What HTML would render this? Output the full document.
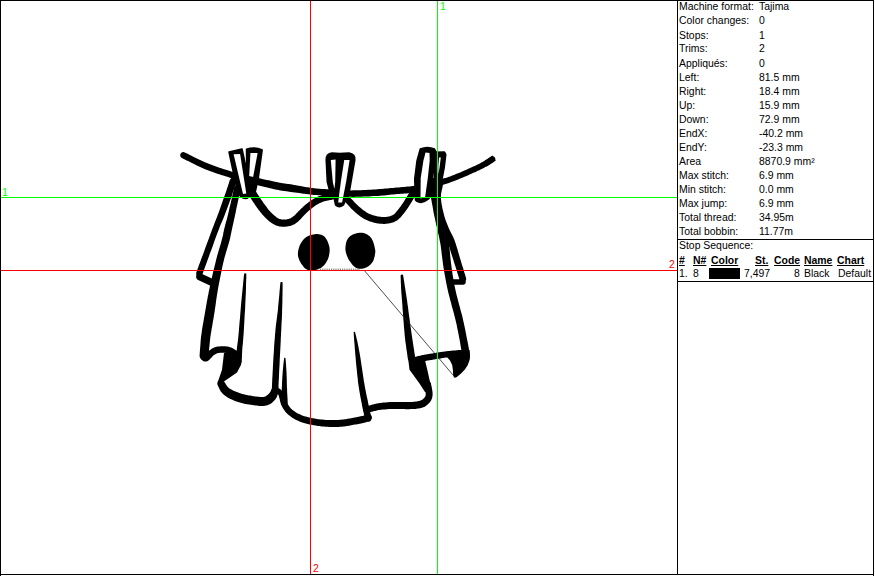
<!DOCTYPE html>
<html><head><meta charset="utf-8">
<style>
html,body{margin:0;padding:0;background:#fff;}
body{width:875px;height:576px;position:relative;overflow:hidden;font-family:"Liberation Sans",Arial,sans-serif;font-size:10px;color:#000;}
.l{position:absolute;background:#000;}
.g{position:absolute;background:#0f0;}
.r{position:absolute;background:#f00;}
.t{position:absolute;white-space:nowrap;line-height:12px;height:12px;transform:scaleX(1.043);transform-origin:0 0;}
.k{left:679px;}
.v{left:759px;}
.h{font-weight:bold;text-decoration:underline;}
svg{position:absolute;left:0;top:0;}
</style></head><body>
<div class="l" style="left:0;top:0;width:874px;height:1px"></div>
<div class="l" style="left:0;top:574px;width:874px;height:1px"></div>
<div class="l" style="left:0;top:0;width:1px;height:576px"></div>
<div class="l" style="left:873px;top:0;width:1px;height:576px"></div>
<div class="l" style="left:677px;top:0;width:1px;height:575px"></div>
<div class="l" style="left:677px;top:239px;width:197px;height:1px"></div>
<div class="l" style="left:677px;top:281px;width:197px;height:1px"></div>
<svg width="875" height="576" viewBox="0 0 875 576">
<path d="M246.5,149.3 Q254.5,146.3 262.2,150 L258.3,178 L255,193 L247,193 Z" fill="#000" stroke="#000" stroke-width="1.5" stroke-linejoin="round"/>
<path d="M250.4,152.9 L257.6,152.9 L252.6,180 L249,180 Z" fill="#fff"/>
<path d="M435,152.2 L444.5,152 L445.8,154.5 L444.3,167 L442.2,178 L440,187 L434,187 Z" fill="#000" stroke="#000" stroke-width="1.5" stroke-linejoin="round"/>
<path d="M439,157.6 L440.8,157.6 L439.6,167 L438.5,174.5 L438.3,167 Z" fill="#fff"/>
<path d="M181.9,158.0 L181.9,158.0 L181.9,158.0 L181.9,158.0 L182.1,158.1 L182.3,158.2 L182.6,158.4 L183.0,158.6 L183.5,158.9 L184.3,159.2 L185.3,159.7 L186.6,160.4 L188.2,161.1 L190.0,162.1 L191.9,163.0 L194.1,164.1 L196.3,165.2 L198.5,166.3 L200.7,167.3 L202.9,168.3 L205.0,169.2 L207.1,170.0 L209.1,170.8 L211.2,171.6 L213.3,172.3 L215.3,173.0 L217.4,173.7 L219.3,174.3 L221.3,174.9 L223.1,175.5 L224.8,176.1 L226.4,176.6 L227.9,177.1 L229.3,177.6 L230.7,178.0 L232.0,178.4 L233.3,178.8 L234.6,179.2 L236.1,179.6 L237.6,180.0 L239.2,180.4 L240.9,180.9 L242.8,181.4 L244.7,181.9 L246.7,182.4 L248.7,183.0 L250.7,183.5 L252.7,184.0 L254.8,184.5 L256.8,185.0 L258.8,185.5 L260.8,186.0 L262.9,186.5 L265.0,187.0 L267.1,187.5 L269.2,188.0 L271.3,188.5 L273.3,188.9 L275.2,189.4 L276.9,189.7 L278.6,190.1 L280.0,190.4 L281.2,190.6 L282.2,190.7 L283.1,190.9 L284.0,191.0 L284.8,191.1 L285.7,191.2 L286.7,191.3 L287.8,191.5 L289.2,191.7 L290.9,191.9 L292.8,192.2 L294.9,192.5 L297.1,192.8 L299.4,193.1 L301.8,193.4 L304.1,193.7 L306.3,194.0 L308.4,194.3 L310.4,194.5 L312.2,194.7 L313.8,194.9 L315.3,195.0 L316.7,195.1 L318.1,195.2 L319.5,195.2 L321.0,195.3 L322.5,195.4 L324.2,195.5 L326.1,195.6 L328.2,195.7 L330.4,195.9 L332.8,196.0 L335.2,196.2 L337.8,196.3 L340.4,196.5 L343.0,196.6 L345.6,196.7 L348.2,196.8 L350.8,196.8 L353.3,196.9 L355.9,196.8 L358.5,196.8 L361.1,196.7 L363.7,196.6 L366.2,196.5 L368.7,196.4 L371.2,196.3 L373.5,196.1 L375.8,196.0 L378.0,195.9 L380.1,195.7 L382.1,195.5 L384.1,195.4 L386.0,195.2 L387.9,195.0 L389.8,194.8 L391.6,194.6 L393.4,194.5 L395.3,194.3 L397.2,194.1 L399.0,194.0 L400.9,193.8 L402.7,193.7 L404.6,193.5 L406.4,193.4 L408.3,193.2 L410.1,193.0 L411.9,192.8 L413.8,192.6 L415.6,192.3 L417.4,192.0 L419.2,191.7 L420.9,191.3 L422.7,191.0 L424.4,190.6 L426.1,190.3 L427.7,189.9 L429.3,189.5 L430.8,189.1 L432.3,188.7 L433.7,188.3 L435.0,187.8 L436.3,187.4 L437.5,186.9 L438.6,186.5 L439.8,186.0 L440.8,185.6 L441.9,185.2 L442.9,184.9 L443.9,184.5 L444.8,184.3 L445.6,184.0 L446.4,183.8 L447.2,183.5 L448.1,183.3 L449.0,183.0 L450.1,182.6 L451.3,182.1 L452.7,181.6 L454.3,181.0 L456.2,180.2 L458.1,179.4 L460.2,178.6 L462.3,177.7 L464.5,176.8 L466.6,175.9 L468.7,175.0 L470.7,174.1 L472.4,173.3 L474.1,172.6 L475.7,171.9 L477.2,171.1 L478.7,170.4 L480.2,169.7 L481.5,169.1 L482.8,168.4 L484.1,167.8 L485.3,167.1 L486.4,166.5 L487.5,165.9 L488.5,165.3 L489.5,164.7 L490.4,164.1 L491.2,163.6 L492.0,163.1 L492.7,162.6 L493.2,162.2 L493.7,161.9 L494.1,161.6 L494.9,160.8 L495.3,159.8 L495.3,158.6 L494.9,157.6 L494.1,156.8 L493.1,156.4 L491.9,156.4 L490.9,156.8 L490.5,157.1 L489.9,157.4 L489.3,157.8 L488.7,158.3 L488.0,158.8 L487.2,159.3 L486.4,159.8 L485.5,160.4 L484.6,160.9 L483.6,161.5 L482.5,162.0 L481.4,162.6 L480.2,163.2 L478.9,163.9 L477.6,164.5 L476.2,165.2 L474.8,165.9 L473.3,166.6 L471.7,167.3 L470.1,168.1 L468.3,168.8 L466.4,169.7 L464.4,170.5 L462.2,171.5 L460.1,172.4 L458.0,173.2 L455.9,174.1 L454.0,174.9 L452.2,175.6 L450.7,176.2 L449.3,176.7 L448.2,177.1 L447.2,177.4 L446.4,177.7 L445.6,177.9 L444.8,178.1 L444.0,178.3 L443.1,178.6 L442.1,178.8 L441.1,179.1 L439.9,179.5 L438.8,179.9 L437.7,180.3 L436.5,180.7 L435.4,181.1 L434.2,181.5 L433.0,181.8 L431.8,182.2 L430.5,182.6 L429.2,182.9 L427.8,183.2 L426.3,183.6 L424.7,183.9 L423.1,184.3 L421.4,184.6 L419.7,184.9 L418.0,185.2 L416.3,185.5 L414.6,185.8 L412.8,186.0 L411.1,186.3 L409.4,186.5 L407.6,186.6 L405.9,186.8 L404.0,187.0 L402.2,187.1 L400.4,187.2 L398.5,187.4 L396.6,187.5 L394.7,187.7 L392.8,187.9 L391.0,188.1 L389.1,188.2 L387.3,188.4 L385.4,188.6 L383.5,188.8 L381.6,189.0 L379.6,189.1 L377.5,189.3 L375.4,189.4 L373.1,189.5 L370.8,189.7 L368.4,189.8 L365.9,189.9 L363.4,190.1 L360.8,190.2 L358.3,190.2 L355.8,190.3 L353.3,190.3 L350.8,190.4 L348.4,190.3 L345.8,190.3 L343.3,190.2 L340.7,190.1 L338.2,189.9 L335.6,189.8 L333.2,189.6 L330.8,189.5 L328.6,189.3 L326.5,189.2 L324.6,189.1 L322.9,189.0 L321.4,188.9 L319.9,188.8 L318.6,188.7 L317.2,188.6 L315.9,188.4 L314.4,188.3 L312.9,188.1 L311.2,187.9 L309.3,187.6 L307.3,187.3 L305.1,186.9 L302.8,186.5 L300.5,186.1 L298.3,185.7 L296.1,185.3 L294.0,185.0 L292.1,184.6 L290.4,184.3 L288.9,184.1 L287.7,183.9 L286.6,183.8 L285.8,183.7 L285.0,183.6 L284.2,183.4 L283.4,183.3 L282.5,183.2 L281.4,183.0 L280.0,182.7 L278.5,182.4 L276.7,182.1 L274.9,181.7 L272.9,181.2 L270.8,180.8 L268.7,180.3 L266.6,179.9 L264.5,179.4 L262.4,178.9 L260.4,178.5 L258.4,178.1 L256.4,177.6 L254.3,177.2 L252.3,176.7 L250.2,176.3 L248.2,175.9 L246.3,175.4 L244.4,175.0 L242.6,174.6 L240.8,174.2 L239.2,173.8 L237.7,173.4 L236.4,173.0 L235.1,172.7 L233.8,172.3 L232.5,171.9 L231.2,171.5 L229.9,171.1 L228.4,170.6 L226.8,170.1 L225.0,169.5 L223.2,168.9 L221.3,168.3 L219.4,167.7 L217.4,167.0 L215.4,166.3 L213.4,165.6 L211.4,164.8 L209.4,164.1 L207.5,163.3 L205.5,162.5 L203.4,161.5 L201.2,160.5 L199.0,159.5 L196.9,158.4 L194.8,157.4 L192.8,156.4 L191.0,155.5 L189.4,154.7 L188.1,154.1 L187.1,153.6 L186.3,153.2 L185.8,153.0 L185.4,152.8 L185.2,152.7 L185.2,152.6 L185.2,152.6 L185.1,152.6 L184.9,152.5 L184.7,152.4 L183.6,152.1 L182.3,152.2 L181.3,152.8 L180.5,153.8 L180.2,154.9 L180.3,156.2 L180.9,157.2Z" fill="#000"/>
<path d="M486.6,166.4 L495.8,160.4 L492.6,155.6 L483.4,161.6Z" fill="#000"/>
<path d="M229,152 L242,149 L245.5,165 L250,196 Q246,200.5 241,197 L237.5,192 Z" fill="#000" stroke="#000" stroke-width="1.5" stroke-linejoin="round"/>
<path d="M233.6,154.2 L240.1,153.9 L246.3,193.4 L243,194 Z" fill="#fff"/>
<path d="M249.5,196.2 L249.9,196.8 L250.4,197.7 L251.1,198.7 L251.8,199.9 L252.7,201.2 L253.5,202.5 L254.4,203.8 L255.3,205.2 L256.2,206.5 L257.1,207.7 L257.9,208.8 L258.7,209.9 L259.6,211.0 L260.5,212.2 L261.4,213.3 L262.3,214.4 L263.3,215.5 L264.2,216.6 L265.2,217.6 L266.2,218.6 L267.2,219.5 L268.1,220.3 L269.1,221.2 L270.2,222.0 L271.2,222.7 L272.3,223.4 L273.4,224.1 L274.5,224.7 L275.6,225.3 L276.8,225.7 L278.1,226.1 L279.3,226.4 L280.6,226.6 L281.8,226.7 L283.0,226.8 L284.1,226.8 L285.3,226.7 L286.4,226.6 L287.4,226.5 L288.4,226.3 L289.4,226.1 L290.4,225.9 L291.3,225.6 L292.2,225.2 L293.1,224.8 L294.0,224.4 L294.8,223.9 L295.6,223.4 L296.5,222.8 L297.3,222.2 L298.2,221.4 L299.1,220.6 L300.0,219.8 L300.8,218.9 L301.6,218.0 L302.5,217.1 L303.2,216.2 L304.0,215.4 L304.8,214.6 L305.5,213.9 L306.3,213.1 L307.2,212.3 L308.0,211.6 L308.8,210.8 L309.7,210.1 L310.5,209.4 L311.3,208.7 L312.1,208.0 L312.9,207.4 L313.7,206.8 L314.6,206.2 L315.5,205.6 L316.3,205.1 L317.2,204.5 L318.1,204.0 L319.0,203.5 L319.9,203.1 L320.8,202.7 L321.7,202.3 L322.6,201.9 L323.5,201.6 L324.5,201.3 L325.7,201.0 L326.8,200.7 L328.0,200.5 L329.1,200.3 L330.1,200.1 L331.1,199.9 L332.0,199.8 L332.6,199.6 L333.8,199.2 L334.7,198.3 L335.1,197.1 L335.1,195.9 L334.7,194.7 L333.8,193.8 L332.6,193.4 L331.4,193.4 L330.8,193.5 L330.0,193.6 L329.1,193.8 L328.0,193.9 L326.8,194.1 L325.5,194.4 L324.2,194.6 L322.9,194.9 L321.6,195.3 L320.4,195.7 L319.2,196.1 L318.1,196.6 L317.1,197.1 L316.0,197.6 L314.9,198.1 L313.9,198.7 L312.9,199.3 L311.8,199.9 L310.9,200.5 L309.9,201.2 L308.9,201.9 L307.9,202.7 L307.0,203.4 L306.0,204.2 L305.1,205.0 L304.3,205.8 L303.4,206.6 L302.5,207.4 L301.7,208.1 L300.9,208.9 L300.0,209.8 L299.1,210.7 L298.2,211.6 L297.4,212.5 L296.6,213.3 L295.8,214.1 L295.1,214.9 L294.4,215.5 L293.7,216.1 L293.1,216.6 L292.4,217.1 L291.8,217.5 L291.2,217.8 L290.6,218.2 L290.1,218.4 L289.6,218.6 L289.0,218.8 L288.5,219.0 L287.9,219.1 L287.2,219.3 L286.4,219.4 L285.6,219.5 L284.8,219.5 L284.0,219.6 L283.2,219.6 L282.3,219.5 L281.5,219.4 L280.8,219.3 L280.0,219.1 L279.4,218.9 L278.7,218.6 L277.9,218.2 L277.2,217.7 L276.4,217.2 L275.7,216.6 L274.9,216.0 L274.1,215.3 L273.2,214.6 L272.4,213.8 L271.6,213.0 L270.8,212.2 L270.0,211.3 L269.2,210.4 L268.4,209.4 L267.6,208.4 L266.8,207.3 L266.0,206.2 L265.1,205.1 L264.3,204.0 L263.5,202.9 L262.7,201.8 L261.9,200.6 L261.1,199.4 L260.2,198.1 L259.4,196.8 L258.6,195.6 L257.8,194.4 L257.2,193.4 L256.6,192.5 L256.1,191.8 L255.1,190.7 L253.6,190.1 L252.1,190.1 L250.6,190.7 L249.5,191.7 L248.9,193.2 L248.9,194.7Z" fill="#000"/>
<path d="M345.0,202.6 L345.5,202.1 L346.0,201.6 L346.2,201.2 L346.3,201.1 L346.3,201.0 L346.1,201.2 L345.7,201.4 L345.1,201.4 L344.6,201.4 L344.6,201.3 L344.9,201.6 L345.5,202.2 L346.2,203.0 L347.1,203.9 L348.0,205.0 L349.0,206.1 L350.1,207.3 L351.1,208.5 L352.2,209.6 L353.3,210.6 L354.4,211.5 L355.4,212.4 L356.4,213.3 L357.5,214.2 L358.6,215.1 L359.7,215.9 L360.8,216.7 L362.0,217.5 L363.1,218.2 L364.2,218.9 L365.4,219.5 L366.5,220.0 L367.7,220.6 L368.8,221.0 L369.9,221.4 L371.1,221.8 L372.2,222.1 L373.3,222.5 L374.4,222.7 L375.5,223.0 L376.6,223.2 L377.8,223.4 L378.9,223.6 L380.0,223.7 L381.2,223.8 L382.3,223.8 L383.4,223.9 L384.6,223.9 L385.6,223.8 L386.7,223.7 L387.7,223.6 L388.7,223.5 L389.7,223.3 L390.7,223.1 L391.7,222.8 L392.7,222.5 L393.7,222.2 L394.6,221.8 L395.5,221.3 L396.5,220.8 L397.4,220.2 L398.2,219.5 L399.0,218.8 L399.8,218.1 L400.5,217.4 L401.1,216.7 L401.7,215.9 L402.3,215.2 L402.9,214.5 L403.4,213.9 L404.0,213.2 L404.6,212.4 L405.1,211.7 L405.7,210.9 L406.2,210.2 L406.8,209.4 L407.3,208.7 L407.8,207.9 L408.3,207.2 L408.8,206.4 L409.4,205.6 L409.9,204.7 L410.5,203.8 L411.0,202.9 L411.6,202.0 L412.1,201.2 L412.6,200.3 L413.1,199.5 L413.6,198.8 L414.0,198.1 L414.4,197.5 L414.7,196.9 L415.1,196.3 L415.4,195.7 L415.8,195.2 L416.0,194.7 L416.3,194.3 L416.6,193.9 L416.8,193.5 L416.9,193.3 L417.4,192.1 L417.4,190.8 L416.9,189.7 L416.0,188.8 L414.8,188.3 L413.5,188.3 L412.4,188.8 L411.5,189.7 L411.3,190.0 L411.1,190.3 L410.8,190.7 L410.5,191.1 L410.2,191.6 L409.8,192.1 L409.4,192.6 L409.1,193.2 L408.6,193.8 L408.2,194.5 L407.8,195.2 L407.3,196.0 L406.8,196.8 L406.3,197.6 L405.8,198.5 L405.2,199.3 L404.7,200.2 L404.2,201.0 L403.7,201.9 L403.2,202.6 L402.7,203.4 L402.2,204.1 L401.7,204.8 L401.2,205.6 L400.7,206.3 L400.2,206.9 L399.7,207.6 L399.2,208.3 L398.7,208.9 L398.2,209.5 L397.6,210.2 L397.0,210.9 L396.5,211.6 L396.0,212.2 L395.4,212.8 L394.9,213.4 L394.4,213.9 L393.9,214.3 L393.4,214.7 L392.9,215.0 L392.4,215.3 L391.8,215.6 L391.2,215.8 L390.6,216.0 L389.9,216.2 L389.2,216.4 L388.5,216.6 L387.7,216.7 L386.9,216.8 L386.1,216.9 L385.3,216.9 L384.4,217.0 L383.5,217.0 L382.6,216.9 L381.7,216.9 L380.7,216.8 L379.8,216.7 L378.8,216.6 L377.9,216.4 L376.9,216.2 L376.0,216.0 L375.0,215.8 L374.1,215.5 L373.1,215.3 L372.2,215.0 L371.2,214.6 L370.3,214.3 L369.4,213.9 L368.5,213.4 L367.6,212.9 L366.6,212.4 L365.7,211.8 L364.7,211.1 L363.8,210.4 L362.8,209.7 L361.8,208.9 L360.8,208.1 L359.8,207.2 L358.8,206.4 L357.9,205.6 L357.0,204.7 L356.0,203.8 L355.0,202.8 L354.0,201.7 L353.0,200.6 L352.0,199.5 L351.0,198.4 L350.0,197.5 L349.1,196.6 L348.0,195.9 L346.8,195.3 L345.3,195.0 L343.9,195.2 L342.6,195.7 L341.8,196.4 L341.3,197.0 L340.9,197.5 L340.7,197.7 L340.8,197.6 L341.0,197.4 L340.2,198.4 L339.8,199.6 L339.9,200.9 L340.4,202.0 L341.4,202.8 L342.6,203.2 L343.9,203.1Z" fill="#000"/>
<path d="M326.2,160 Q326,153.5 332,153 L339.6,153.6 L349,153 Q355.5,154 354.8,160 L349.5,190.8 L343.5,205 Q339,208.5 335.6,205 L333.5,195 L329.5,190 L327.3,182 Z" fill="#000" stroke="#000" stroke-width="1.5" stroke-linejoin="round"/>
<path d="M330.8,160 L335.6,159.5 L335.2,182 L334.4,189 L332.8,182 Z" fill="#fff"/>
<path d="M344.25,160 L349.6,160 L346.1,182 L342.1,202.5 L338.2,202.5 L340.8,182 Z" fill="#fff"/>
<path d="M420.3,149 Q427.4,146 434.5,149 L436.5,153 L432.1,179 L430,197.3 L428.5,199 Q422,204.5 416.5,201 L415.5,199.9 L414.7,179 L417,160.75 Z" fill="#000" stroke="#000" stroke-width="1.5" stroke-linejoin="round"/>
<path d="M425.5,152.6 L429.5,152.9 L429.7,160.75 L427.8,178 L425.1,197.3 L420.5,198.5 L420.7,178 L423.4,160.75 Z" fill="#fff"/>
<path d="M430,178 L440,178 L440,200 L432,200 Z" fill="#000"/>
<path d="M229.9,180.0 L229.6,180.7 L229.3,181.6 L229.0,182.7 L228.6,183.9 L228.2,185.1 L227.8,186.4 L227.3,187.7 L226.9,188.9 L226.6,190.0 L226.3,190.9 L226.0,191.7 L225.8,192.2 L225.7,192.6 L225.6,193.0 L225.5,193.3 L225.3,193.7 L225.2,194.1 L224.9,194.7 L224.7,195.5 L224.3,196.5 L223.9,197.8 L223.3,199.3 L222.7,201.0 L222.1,202.8 L221.5,204.6 L220.8,206.6 L220.1,208.5 L219.4,210.4 L218.8,212.2 L218.2,213.8 L217.6,215.3 L217.1,216.7 L216.6,218.0 L216.1,219.2 L215.6,220.4 L215.1,221.8 L214.5,223.2 L213.9,224.9 L213.2,226.7 L212.3,228.9 L211.4,231.5 L210.3,234.4 L209.1,237.7 L207.8,241.2 L206.5,244.7 L205.2,248.3 L204.0,251.7 L202.8,254.9 L201.7,257.7 L200.8,260.2 L200.1,262.2 L199.4,264.0 L198.8,265.6 L198.3,267.0 L197.9,268.2 L197.5,269.3 L197.1,270.2 L196.8,271.1 L196.6,271.8 L196.3,272.4 L196.2,273.6 L196.4,274.8 L197.2,275.8 L198.2,276.5 L199.4,276.6 L200.6,276.4 L201.6,275.6 L202.3,274.6 L202.5,273.9 L202.8,273.2 L203.1,272.4 L203.4,271.5 L203.8,270.4 L204.2,269.2 L204.8,267.8 L205.3,266.2 L206.0,264.4 L206.8,262.3 L207.6,259.9 L208.7,257.0 L209.8,253.8 L211.1,250.4 L212.4,246.9 L213.7,243.3 L214.9,239.8 L216.1,236.6 L217.2,233.6 L218.2,231.1 L219.0,229.0 L219.7,227.1 L220.3,225.5 L220.9,224.1 L221.5,222.8 L222.0,221.6 L222.5,220.4 L223.1,219.1 L223.6,217.7 L224.2,216.2 L224.9,214.5 L225.6,212.6 L226.3,210.7 L227.0,208.8 L227.7,206.9 L228.4,205.0 L229.1,203.2 L229.7,201.6 L230.2,200.1 L230.7,198.9 L231.1,197.8 L231.4,197.1 L231.6,196.5 L231.8,196.0 L231.9,195.6 L232.0,195.2 L232.2,194.8 L232.3,194.4 L232.5,193.8 L232.7,193.1 L233.0,192.1 L233.4,191.0 L233.8,189.8 L234.2,188.5 L234.6,187.2 L235.0,185.9 L235.3,184.7 L235.7,183.6 L235.9,182.7 L236.1,182.0 L236.3,180.7 L235.9,179.5 L235.1,178.5 L234.0,177.9 L232.7,177.7 L231.5,178.1 L230.5,178.9Z" fill="#000"/>
<path d="M198.1,280.0 L211.5,286.2 L212.9,286.5 L214.2,286.3 L215.4,285.6 L216.2,284.5 L216.5,283.1 L216.3,281.8 L215.6,280.6 L214.5,279.8 L201.1,273.6 L199.7,273.3 L198.4,273.5 L197.2,274.2 L196.4,275.3 L196.1,276.7 L196.3,278.0 L197.0,279.2Z" fill="#000"/>
<path d="M234.1,187.8 L234.0,188.3 L233.9,188.9 L233.7,189.6 L233.5,190.4 L233.3,191.3 L233.1,192.3 L232.9,193.4 L232.6,194.5 L232.3,195.7 L232.0,197.0 L231.7,198.4 L231.4,200.0 L231.0,201.6 L230.6,203.4 L230.2,205.3 L229.7,207.1 L229.3,209.0 L228.9,210.8 L228.5,212.6 L228.1,214.2 L227.7,215.8 L227.3,217.4 L226.9,219.0 L226.5,220.5 L226.0,222.1 L225.6,223.6 L225.2,225.1 L224.9,226.5 L224.5,227.8 L224.2,229.1 L223.9,230.3 L223.7,231.4 L223.5,232.3 L223.3,233.1 L223.2,233.9 L223.1,234.7 L222.9,235.5 L222.7,236.5 L222.4,237.6 L222.0,239.0 L221.6,240.6 L221.1,242.4 L220.6,244.2 L220.0,246.2 L219.3,248.4 L218.7,250.6 L218.0,252.9 L217.3,255.3 L216.7,257.8 L216.0,260.3 L215.4,263.0 L214.7,265.8 L214.0,268.7 L213.2,271.7 L212.5,274.8 L211.8,277.9 L211.1,280.9 L210.5,283.8 L209.9,286.6 L209.3,289.2 L208.8,291.6 L208.4,293.9 L207.9,296.0 L207.6,298.1 L207.2,300.1 L206.8,302.1 L206.5,304.0 L206.1,306.0 L205.8,308.1 L205.4,310.2 L205.0,312.5 L204.6,315.0 L204.1,317.5 L203.7,320.0 L203.3,322.6 L202.8,325.1 L202.4,327.6 L202.0,330.0 L201.7,332.3 L201.4,334.4 L201.1,336.3 L200.9,338.2 L200.7,340.0 L200.6,341.7 L200.5,343.2 L200.4,344.7 L200.3,346.1 L200.2,347.3 L200.1,348.5 L200.0,349.5 L199.9,350.5 L199.9,351.4 L199.8,352.1 L199.8,352.8 L199.7,353.4 L199.7,353.9 L199.7,354.4 L199.6,354.8 L199.6,355.2 L199.6,355.5 L199.7,357.1 L200.5,358.6 L201.7,359.7 L203.3,360.2 L204.9,360.1 L206.4,359.3 L207.5,358.1 L208.0,356.5 L208.1,356.2 L208.1,355.9 L208.2,355.5 L208.3,355.0 L208.4,354.5 L208.5,353.9 L208.6,353.2 L208.7,352.4 L208.8,351.5 L209.0,350.5 L209.1,349.3 L209.2,348.1 L209.4,346.8 L209.5,345.5 L209.6,344.0 L209.8,342.5 L209.9,340.9 L210.1,339.2 L210.3,337.5 L210.6,335.6 L210.9,333.6 L211.3,331.5 L211.6,329.1 L212.1,326.7 L212.5,324.2 L212.9,321.6 L213.4,319.1 L213.8,316.5 L214.2,314.1 L214.6,311.8 L214.9,309.6 L215.2,307.4 L215.5,305.4 L215.8,303.5 L216.0,301.5 L216.3,299.5 L216.6,297.5 L216.9,295.4 L217.3,293.2 L217.7,290.8 L218.1,288.2 L218.6,285.5 L219.2,282.5 L219.8,279.5 L220.4,276.5 L221.0,273.4 L221.6,270.4 L222.2,267.5 L222.8,264.7 L223.4,262.2 L224.0,259.7 L224.6,257.3 L225.3,255.0 L225.9,252.7 L226.6,250.5 L227.2,248.4 L227.8,246.4 L228.4,244.5 L228.9,242.7 L229.4,241.0 L229.8,239.5 L230.1,238.2 L230.3,237.2 L230.5,236.2 L230.7,235.3 L230.9,234.5 L231.0,233.7 L231.2,232.9 L231.4,232.0 L231.6,230.9 L231.9,229.6 L232.2,228.2 L232.5,226.8 L232.8,225.3 L233.2,223.8 L233.5,222.3 L233.8,220.7 L234.2,219.1 L234.6,217.4 L234.9,215.8 L235.3,214.1 L235.7,212.3 L236.0,210.5 L236.4,208.6 L236.8,206.7 L237.2,204.9 L237.6,203.1 L237.9,201.4 L238.3,199.8 L238.6,198.4 L238.8,197.1 L239.1,195.9 L239.3,194.8 L239.6,193.7 L239.8,192.7 L239.9,191.8 L240.1,191.0 L240.2,190.3 L240.4,189.7 L240.5,189.2 L240.5,187.9 L240.0,186.7 L239.2,185.8 L238.0,185.3 L236.7,185.3 L235.5,185.8 L234.6,186.6Z" fill="#000"/>
<path d="M437.2,184.5 L437.0,185.2 L436.8,186.0 L436.6,187.1 L436.3,188.4 L436.0,189.8 L435.7,191.3 L435.4,192.9 L435.2,194.6 L435.1,196.3 L435.1,198.1 L435.2,199.9 L435.4,201.7 L435.6,203.6 L435.9,205.5 L436.3,207.5 L436.7,209.4 L437.1,211.4 L437.5,213.2 L437.9,215.0 L438.3,216.7 L438.7,218.4 L439.1,220.0 L439.6,221.5 L440.0,223.0 L440.5,224.4 L441.0,225.8 L441.5,227.2 L442.0,228.6 L442.4,229.9 L442.9,231.2 L443.4,232.5 L443.9,233.8 L444.4,234.9 L444.9,235.9 L445.4,237.0 L445.8,238.0 L446.3,239.1 L446.8,240.3 L447.3,241.7 L447.9,243.2 L448.5,245.0 L449.3,247.1 L450.0,249.5 L450.8,251.9 L451.6,254.4 L452.4,256.9 L453.2,259.4 L453.9,261.8 L454.6,264.0 L455.3,266.0 L455.8,267.8 L456.4,269.6 L456.9,271.3 L457.4,272.9 L457.9,274.4 L458.3,275.8 L458.7,277.1 L459.0,278.2 L459.3,279.2 L459.5,280.0 L460.2,281.2 L461.2,282.0 L462.5,282.4 L463.8,282.3 L465.0,281.6 L465.8,280.6 L466.2,279.3 L466.1,278.0 L465.8,277.2 L465.5,276.2 L465.2,275.1 L464.8,273.8 L464.3,272.4 L463.9,270.9 L463.4,269.3 L462.9,267.6 L462.3,265.8 L461.7,264.0 L461.2,262.0 L460.5,259.8 L459.8,257.4 L459.1,254.9 L458.3,252.3 L457.6,249.8 L456.8,247.3 L456.1,244.9 L455.4,242.7 L454.7,240.8 L454.0,239.1 L453.4,237.5 L452.8,236.2 L452.2,235.0 L451.6,233.9 L451.1,232.9 L450.6,231.9 L450.1,231.0 L449.6,229.9 L449.1,228.8 L448.5,227.5 L448.0,226.2 L447.5,224.9 L446.9,223.6 L446.4,222.3 L445.9,221.0 L445.4,219.6 L445.0,218.2 L444.5,216.8 L444.1,215.3 L443.7,213.6 L443.3,211.9 L442.8,210.1 L442.4,208.3 L442.1,206.4 L441.7,204.5 L441.4,202.7 L441.2,201.0 L441.0,199.4 L440.9,197.9 L440.9,196.5 L441.0,195.1 L441.1,193.7 L441.4,192.3 L441.6,191.0 L441.9,189.7 L442.2,188.5 L442.5,187.3 L442.7,186.3 L442.8,185.5 L442.8,184.4 L442.4,183.4 L441.6,182.6 L440.5,182.2 L439.4,182.2 L438.4,182.6 L437.6,183.4Z" fill="#000"/>
<path d="M463.0,279.2 L452.0,279.2 L450.9,279.4 L450.0,280.0 L449.4,280.9 L449.2,282.0 L449.4,283.1 L450.0,284.0 L450.9,284.6 L452.0,284.8 L463.0,284.8 L464.1,284.6 L465.0,284.0 L465.6,283.1 L465.8,282.0 L465.6,280.9 L465.0,280.0 L464.1,279.4Z" fill="#000"/>
<path d="M428.7,191.1 L428.9,191.6 L429.1,192.1 L429.3,192.7 L429.5,193.3 L429.7,193.9 L430.0,194.7 L430.3,195.5 L430.5,196.4 L430.8,197.4 L431.1,198.6 L431.4,199.9 L431.6,201.3 L431.9,202.9 L432.2,204.6 L432.6,206.4 L432.9,208.3 L433.2,210.3 L433.6,212.4 L434.0,214.5 L434.5,216.8 L435.0,219.1 L435.5,221.6 L436.1,224.3 L436.8,226.9 L437.4,229.7 L438.0,232.4 L438.6,235.1 L439.2,237.8 L439.7,240.4 L440.2,242.8 L440.6,245.1 L440.9,247.3 L441.2,249.6 L441.5,251.8 L441.7,254.0 L442.0,256.2 L442.3,258.5 L442.6,260.8 L442.9,263.2 L443.2,265.6 L443.6,268.0 L444.0,270.4 L444.4,272.8 L444.8,275.2 L445.3,277.6 L445.7,280.1 L446.2,282.7 L446.7,285.3 L447.3,288.0 L447.9,290.8 L448.6,293.8 L449.4,296.8 L450.2,299.9 L451.1,303.1 L451.9,306.4 L452.8,309.6 L453.7,312.8 L454.5,316.0 L455.3,319.1 L456.0,322.1 L456.7,325.1 L457.3,328.3 L458.0,331.4 L458.6,334.6 L459.2,337.8 L459.8,340.8 L460.3,343.7 L460.7,346.3 L461.1,348.6 L461.4,350.6 L461.7,352.2 L461.8,353.5 L461.9,354.5 L461.9,355.2 L461.9,355.8 L461.9,356.2 L461.8,356.5 L461.8,357.0 L461.7,357.5 L461.7,358.1 L462.0,359.6 L462.9,360.9 L464.2,361.7 L465.8,362.0 L467.3,361.7 L468.6,360.8 L469.4,359.5 L469.7,357.9 L469.7,357.7 L469.7,357.5 L469.7,357.1 L469.7,356.6 L469.7,355.8 L469.7,354.9 L469.6,353.9 L469.4,352.6 L469.2,351.1 L469.0,349.4 L468.6,347.3 L468.2,345.0 L467.7,342.3 L467.1,339.4 L466.5,336.4 L465.9,333.2 L465.3,330.0 L464.6,326.7 L463.9,323.5 L463.2,320.4 L462.5,317.3 L461.7,314.1 L460.8,310.9 L460.0,307.7 L459.1,304.4 L458.2,301.2 L457.4,298.1 L456.6,295.0 L455.9,292.0 L455.3,289.2 L454.7,286.5 L454.2,283.8 L453.7,281.3 L453.3,278.8 L452.9,276.3 L452.5,273.9 L452.2,271.5 L451.8,269.2 L451.5,266.8 L451.2,264.4 L450.9,262.1 L450.6,259.8 L450.4,257.6 L450.2,255.4 L450.0,253.1 L449.8,250.9 L449.5,248.5 L449.2,246.2 L448.9,243.7 L448.4,241.2 L447.9,238.6 L447.2,235.9 L446.5,233.2 L445.8,230.5 L445.0,227.7 L444.2,225.0 L443.4,222.4 L442.7,219.8 L442.1,217.5 L441.5,215.2 L441.0,213.1 L440.6,211.0 L440.2,209.0 L439.8,207.0 L439.5,205.1 L439.1,203.3 L438.8,201.6 L438.5,200.0 L438.2,198.5 L437.9,197.0 L437.6,195.7 L437.3,194.5 L436.9,193.4 L436.6,192.4 L436.3,191.6 L436.0,190.8 L435.8,190.2 L435.6,189.6 L435.4,189.2 L435.3,188.9 L434.6,187.7 L433.5,186.9 L432.2,186.5 L430.9,186.7 L429.7,187.4 L428.9,188.5 L428.5,189.8Z" fill="#000"/>
<path d="M317.4,234.1 L318.7,234.3 L319.9,234.5 L321.1,234.8 L322.3,235.2 L323.3,235.7 L324.3,236.4 L325.1,237.3 L325.9,238.4 L326.6,239.6 L327.3,240.8 L327.8,242.1 L328.3,243.3 L328.7,244.4 L329.0,245.5 L329.3,246.6 L329.5,247.8 L329.6,248.9 L329.7,250.1 L329.6,251.4 L329.5,252.8 L329.3,254.1 L329.0,255.5 L328.7,256.9 L328.3,258.1 L327.8,259.4 L327.2,260.6 L326.6,261.8 L325.8,263.0 L325.1,264.0 L324.3,265.0 L323.4,265.9 L322.6,266.6 L321.6,267.4 L320.6,268.0 L319.6,268.5 L318.6,269.0 L317.5,269.4 L316.3,269.7 L315.1,269.9 L314.0,270.1 L312.8,270.2 L311.7,270.3 L310.7,270.3 L309.7,270.2 L308.7,270.1 L307.8,269.9 L306.9,269.6 L306.0,269.1 L305.2,268.5 L304.3,267.7 L303.5,266.8 L302.8,265.8 L302.1,264.8 L301.4,263.9 L300.8,262.9 L300.3,262.0 L299.7,261.0 L299.3,260.1 L298.9,259.1 L298.6,258.1 L298.3,257.2 L298.1,256.3 L298.0,255.4 L297.9,254.4 L297.9,253.4 L298.0,252.4 L298.1,251.3 L298.3,250.2 L298.6,249.0 L298.9,247.9 L299.3,246.7 L299.7,245.6 L300.2,244.5 L300.8,243.3 L301.5,242.2 L302.2,241.2 L302.9,240.2 L303.7,239.3 L304.5,238.5 L305.4,237.8 L306.3,237.1 L307.3,236.5 L308.3,236.0 L309.4,235.5 L310.6,235.1 L312.0,234.7 L313.4,234.5 L314.8,234.2 L316.1,234.1 L317.4,234.1Z" fill="#000"/>
<path d="M360.9,232.8 L362.1,232.8 L363.4,233.0 L364.5,233.3 L365.7,233.7 L366.7,234.2 L367.7,234.7 L368.6,235.4 L369.5,236.1 L370.3,236.9 L371.0,237.8 L371.7,238.8 L372.3,239.9 L372.8,241.1 L373.4,242.4 L373.8,243.8 L374.2,245.3 L374.5,246.6 L374.8,247.9 L375.0,248.9 L375.2,249.8 L375.3,250.7 L375.3,251.6 L375.3,252.5 L375.1,253.6 L374.9,254.8 L374.7,256.2 L374.3,257.6 L373.9,259.0 L373.4,260.4 L372.9,261.6 L372.2,262.6 L371.4,263.6 L370.6,264.5 L369.7,265.3 L368.7,266.1 L367.7,266.7 L366.7,267.3 L365.5,267.8 L364.3,268.2 L363.1,268.5 L362.0,268.7 L360.9,268.8 L359.8,268.8 L358.8,268.7 L357.9,268.5 L357.0,268.2 L356.0,267.8 L355.1,267.3 L354.2,266.6 L353.3,265.7 L352.4,264.8 L351.6,263.7 L350.8,262.6 L350.0,261.6 L349.3,260.5 L348.6,259.4 L348.0,258.2 L347.5,257.0 L347.0,255.9 L346.6,254.7 L346.2,253.6 L345.9,252.5 L345.7,251.4 L345.5,250.2 L345.4,249.1 L345.4,247.9 L345.5,246.6 L345.7,245.2 L345.9,243.8 L346.2,242.4 L346.6,241.0 L347.1,239.9 L347.8,238.8 L348.5,237.8 L349.3,236.9 L350.2,236.1 L351.2,235.4 L352.3,234.7 L353.5,234.2 L355.0,233.7 L356.5,233.3 L358.0,233.0 L359.5,232.8 L360.9,232.8Z" fill="#000"/>
<path d="M244.1,274.3 L243.9,275.8 L243.7,277.6 L243.5,279.8 L243.2,282.3 L243.0,284.9 L242.7,287.7 L242.4,290.7 L242.1,293.7 L241.8,296.8 L241.5,299.9 L241.2,303.1 L240.9,306.6 L240.6,310.3 L240.3,314.1 L240.0,318.0 L239.6,321.8 L239.3,325.5 L239.0,329.0 L238.8,332.1 L238.5,334.8 L238.3,337.1 L238.1,339.1 L237.9,340.8 L237.7,342.3 L237.5,343.6 L237.3,344.9 L237.2,346.1 L237.0,347.2 L236.9,348.5 L236.8,349.8 L236.7,351.2 L236.6,352.6 L236.5,354.1 L236.4,355.5 L236.4,356.8 L236.4,358.1 L236.3,359.3 L236.3,360.3 L236.3,361.2 L236.3,361.9 L236.4,363.0 L237.0,363.9 L237.9,364.5 L238.9,364.7 L240.0,364.6 L240.9,364.0 L241.5,363.1 L241.7,362.1 L241.8,361.4 L241.8,360.5 L241.8,359.5 L241.9,358.3 L241.9,357.0 L242.0,355.7 L242.0,354.3 L242.1,352.9 L242.2,351.5 L242.2,350.2 L242.3,349.0 L242.4,347.8 L242.5,346.6 L242.6,345.5 L242.8,344.2 L242.9,342.9 L243.0,341.3 L243.2,339.6 L243.3,337.5 L243.5,335.2 L243.7,332.5 L243.9,329.3 L244.1,325.8 L244.3,322.2 L244.5,318.3 L244.7,314.4 L245.0,310.6 L245.2,306.9 L245.3,303.4 L245.5,300.1 L245.6,297.1 L245.8,294.0 L245.9,290.9 L246.0,288.0 L246.0,285.1 L246.1,282.4 L246.2,280.0 L246.3,277.8 L246.3,276.0 L246.3,274.5 L246.3,274.0 L246.1,273.6 L245.7,273.4 L245.3,273.3 L244.8,273.3 L244.4,273.5 L244.2,273.9Z" fill="#000"/>
<path d="M280.4,282.9 L280.2,284.6 L280.0,286.6 L279.8,289.1 L279.5,291.9 L279.3,294.9 L279.0,298.0 L278.7,301.1 L278.4,304.2 L278.1,307.1 L277.9,309.9 L277.6,312.4 L277.3,314.8 L277.0,317.1 L276.7,319.4 L276.4,321.8 L276.1,324.1 L275.8,326.6 L275.5,329.2 L275.3,331.9 L275.0,334.8 L274.8,338.0 L274.5,341.4 L274.2,345.0 L274.0,348.7 L273.8,352.5 L273.5,356.3 L273.3,360.0 L273.1,363.5 L272.9,366.8 L272.8,369.8 L272.6,372.7 L272.5,375.4 L272.3,378.1 L272.2,380.6 L272.1,383.0 L272.0,385.3 L271.9,387.3 L271.9,389.1 L271.8,390.6 L271.8,391.9 L271.9,393.1 L272.6,394.2 L273.6,394.9 L274.9,395.2 L276.1,395.1 L277.2,394.4 L277.9,393.4 L278.2,392.1 L278.3,390.9 L278.4,389.4 L278.5,387.6 L278.5,385.5 L278.6,383.3 L278.7,380.9 L278.9,378.4 L279.0,375.7 L279.1,373.0 L279.2,370.2 L279.4,367.2 L279.6,363.8 L279.7,360.3 L279.9,356.6 L280.1,352.9 L280.3,349.1 L280.5,345.4 L280.7,341.8 L280.8,338.3 L281.0,335.2 L281.1,332.3 L281.3,329.6 L281.4,327.1 L281.5,324.6 L281.6,322.2 L281.8,319.9 L281.9,317.5 L282.0,315.2 L282.1,312.7 L282.1,310.1 L282.2,307.4 L282.3,304.4 L282.4,301.3 L282.4,298.1 L282.5,295.0 L282.5,292.0 L282.6,289.2 L282.6,286.8 L282.6,284.7 L282.6,283.1 L282.6,282.6 L282.4,282.2 L282.0,282.0 L281.6,281.9 L281.1,281.9 L280.7,282.1 L280.5,282.5Z" fill="#000"/>
<path d="M284.1,358.5 L284.0,359.3 L283.9,360.3 L283.7,361.5 L283.6,362.8 L283.4,364.2 L283.3,365.8 L283.1,367.3 L283.0,368.9 L282.8,370.5 L282.7,372.0 L282.6,373.5 L282.5,375.0 L282.4,376.6 L282.3,378.2 L282.2,379.9 L282.1,381.5 L282.0,383.2 L282.0,384.8 L281.9,386.4 L281.8,388.0 L281.7,389.6 L281.7,391.3 L281.6,393.1 L281.5,394.8 L281.5,396.5 L281.4,398.2 L281.4,399.7 L281.3,401.0 L281.3,402.1 L281.3,403.0 L281.5,404.3 L282.2,405.3 L283.3,406.0 L284.5,406.2 L285.8,406.0 L286.8,405.3 L287.5,404.2 L287.7,403.0 L287.7,402.1 L287.6,400.9 L287.6,399.6 L287.5,398.1 L287.4,396.5 L287.3,394.8 L287.2,393.0 L287.1,391.3 L287.1,389.6 L287.0,388.0 L286.9,386.4 L286.9,384.8 L286.8,383.2 L286.8,381.6 L286.8,379.9 L286.7,378.3 L286.7,376.7 L286.6,375.1 L286.6,373.5 L286.5,372.0 L286.4,370.5 L286.3,368.9 L286.2,367.4 L286.1,365.8 L286.0,364.3 L285.9,362.8 L285.8,361.5 L285.7,360.3 L285.6,359.3 L285.5,358.5 L285.5,358.2 L285.3,358.0 L285.1,357.8 L284.8,357.8 L284.5,357.8 L284.3,358.0 L284.1,358.2Z" fill="#000"/>
<path d="M353.7,332.6 L353.7,333.3 L353.8,334.3 L353.8,335.3 L353.9,336.6 L354.0,337.9 L354.1,339.3 L354.2,340.7 L354.3,342.2 L354.5,343.7 L354.6,345.2 L354.7,346.7 L354.8,348.3 L354.9,349.8 L355.1,351.5 L355.2,353.1 L355.3,354.8 L355.5,356.6 L355.7,358.4 L355.8,360.3 L356.0,362.3 L356.2,364.4 L356.4,366.6 L356.7,368.9 L356.9,371.2 L357.1,373.6 L357.4,376.0 L357.7,378.5 L357.9,380.9 L358.2,383.2 L358.5,385.5 L358.9,387.7 L359.2,390.0 L359.6,392.2 L360.0,394.5 L360.4,396.7 L360.8,398.8 L361.2,400.9 L361.6,402.8 L361.9,404.6 L362.2,406.2 L362.5,407.7 L362.8,409.1 L363.1,410.4 L363.3,411.5 L363.6,412.6 L363.8,413.5 L364.0,414.4 L364.2,415.2 L364.4,415.9 L364.5,416.5 L364.7,417.1 L364.8,417.6 L364.9,418.0 L364.9,418.3 L365.0,418.5 L365.0,418.7 L365.0,418.8 L365.1,418.9 L365.1,419.1 L365.1,419.2 L365.6,420.4 L366.6,421.2 L367.7,421.7 L369.0,421.7 L370.2,421.2 L371.0,420.2 L371.5,419.1 L371.5,417.8 L371.4,417.7 L371.4,417.6 L371.4,417.4 L371.4,417.3 L371.3,417.1 L371.3,416.8 L371.2,416.5 L371.1,416.2 L371.0,415.7 L370.9,415.1 L370.7,414.4 L370.5,413.7 L370.4,412.9 L370.2,412.0 L369.9,411.1 L369.7,410.1 L369.5,408.9 L369.2,407.7 L368.9,406.4 L368.6,405.0 L368.2,403.3 L367.9,401.5 L367.5,399.6 L367.0,397.6 L366.6,395.5 L366.1,393.3 L365.7,391.1 L365.3,388.9 L364.9,386.7 L364.5,384.5 L364.1,382.3 L363.7,380.1 L363.4,377.7 L363.0,375.3 L362.7,372.9 L362.3,370.6 L362.0,368.2 L361.6,365.9 L361.3,363.7 L361.0,361.7 L360.7,359.7 L360.4,357.8 L360.1,356.0 L359.8,354.3 L359.5,352.6 L359.2,350.9 L358.9,349.3 L358.6,347.8 L358.3,346.2 L358.0,344.8 L357.7,343.3 L357.4,341.8 L357.1,340.3 L356.7,338.9 L356.4,337.5 L356.1,336.2 L355.8,335.0 L355.5,334.0 L355.3,333.1 L355.1,332.4 L355.0,332.1 L354.8,331.9 L354.6,331.8 L354.3,331.8 L354.0,331.9 L353.8,332.1 L353.7,332.3Z" fill="#000"/>
<path d="M400.6,275.9 L400.6,276.8 L400.7,277.9 L400.7,279.1 L400.8,280.6 L400.8,282.1 L400.9,283.8 L401.0,285.4 L401.0,287.1 L401.1,288.7 L401.2,290.2 L401.3,291.6 L401.4,293.0 L401.5,294.2 L401.6,295.5 L401.7,296.8 L401.8,298.2 L401.9,299.7 L402.1,301.3 L402.2,303.2 L402.4,305.3 L402.5,307.7 L402.7,310.4 L403.0,313.4 L403.2,316.6 L403.4,319.8 L403.7,323.1 L403.9,326.4 L404.2,329.6 L404.5,332.6 L404.7,335.4 L405.0,338.1 L405.3,340.9 L405.7,343.6 L406.1,346.3 L406.4,348.9 L406.8,351.3 L407.1,353.6 L407.4,355.5 L407.6,357.2 L407.8,358.5 L408.3,359.9 L409.3,361.0 L410.6,361.6 L412.0,361.7 L413.4,361.2 L414.5,360.2 L415.1,358.9 L415.2,357.5 L415.0,356.1 L414.7,354.4 L414.4,352.5 L414.1,350.2 L413.7,347.8 L413.3,345.3 L412.9,342.6 L412.5,339.9 L412.1,337.2 L411.7,334.6 L411.3,331.8 L410.9,328.8 L410.4,325.7 L410.0,322.5 L409.6,319.2 L409.1,316.0 L408.7,312.8 L408.3,309.9 L408.0,307.1 L407.6,304.7 L407.3,302.6 L407.1,300.7 L406.8,299.1 L406.6,297.6 L406.4,296.2 L406.2,295.0 L406.0,293.7 L405.8,292.5 L405.6,291.2 L405.4,289.8 L405.2,288.3 L404.9,286.7 L404.7,285.1 L404.4,283.4 L404.2,281.8 L403.9,280.3 L403.7,278.8 L403.5,277.6 L403.3,276.5 L403.2,275.7 L403.0,275.2 L402.7,274.8 L402.3,274.6 L401.8,274.5 L401.3,274.7 L400.9,275.0 L400.7,275.4Z" fill="#000"/>
<path d="M200.6,358.0 L200.5,357.8 L200.5,357.6 L200.7,357.9 L200.9,358.3 L201.2,358.9 L201.7,359.7 L202.6,360.6 L204.0,361.4 L205.9,361.6 L207.4,361.2 L208.4,360.5 L209.2,359.9 L209.8,359.2 L210.5,358.6 L211.1,357.9 L211.8,357.2 L212.4,356.5 L212.9,356.0 L213.4,355.5 L213.9,355.1 L214.4,354.8 L214.9,354.4 L215.4,354.2 L215.8,353.9 L216.2,353.7 L216.6,353.5 L217.0,353.4 L217.4,353.2 L217.9,353.1 L218.5,353.0 L219.2,352.9 L220.0,352.8 L220.9,352.8 L221.9,352.7 L222.8,352.7 L223.8,352.8 L224.8,352.8 L225.7,352.9 L226.5,353.0 L227.2,353.2 L227.9,353.3 L228.6,353.6 L229.4,354.0 L230.2,354.4 L231.0,354.8 L231.8,355.3 L232.6,355.8 L233.3,356.2 L233.9,356.6 L234.4,356.9 L235.7,357.2 L236.9,357.1 L238.0,356.5 L238.9,355.6 L239.2,354.3 L239.1,353.1 L238.5,352.0 L237.6,351.1 L237.1,350.9 L236.6,350.6 L235.9,350.2 L235.1,349.7 L234.2,349.2 L233.2,348.6 L232.2,348.1 L231.1,347.6 L229.9,347.2 L228.8,346.8 L227.6,346.6 L226.4,346.4 L225.3,346.3 L224.1,346.3 L222.9,346.2 L221.7,346.2 L220.6,346.3 L219.5,346.4 L218.5,346.5 L217.5,346.6 L216.6,346.8 L215.7,347.0 L214.8,347.2 L214.1,347.6 L213.3,347.9 L212.6,348.3 L212.0,348.6 L211.4,349.0 L210.8,349.4 L210.1,349.9 L209.3,350.4 L208.5,351.1 L207.8,351.8 L207.0,352.5 L206.3,353.2 L205.7,353.9 L205.1,354.4 L204.7,354.8 L204.4,354.9 L204.6,354.8 L205.4,354.5 L206.7,354.7 L207.7,355.2 L208.1,355.6 L208.3,355.8 L208.4,355.7 L208.4,355.5 L208.4,355.2 L208.3,354.5 L208.0,354.0 L207.0,352.7 L205.5,351.9 L203.9,351.8 L202.3,352.3 L201.0,353.3 L200.2,354.8 L200.1,356.4Z" fill="#000"/>
<path d="M224,353 L237,353 L241.2,364.5 L237,372.5 L224.7,381 L217.8,382 L222,369.7 Z" fill="#000"/>
<path d="M217.8,385.4 L218.0,385.8 L218.2,386.4 L218.6,387.1 L219.0,388.1 L219.5,389.1 L220.1,390.2 L220.8,391.4 L221.7,392.6 L222.7,393.8 L223.9,394.8 L225.1,395.7 L226.3,396.6 L227.6,397.4 L229.0,398.2 L230.4,398.9 L231.9,399.6 L233.4,400.3 L235.0,400.9 L236.5,401.5 L238.1,402.1 L239.8,402.6 L241.6,403.1 L243.4,403.5 L245.3,403.9 L247.1,404.2 L249.0,404.5 L250.7,404.8 L252.4,405.1 L254.0,405.3 L255.5,405.5 L256.8,405.6 L258.0,405.8 L259.2,405.9 L260.4,406.0 L261.5,406.0 L262.7,406.0 L263.8,406.0 L265.0,405.8 L266.1,405.6 L267.3,405.3 L268.5,404.8 L269.7,404.3 L270.7,403.7 L271.7,403.0 L272.6,402.3 L273.3,401.5 L274.1,400.8 L274.7,400.1 L275.3,399.4 L275.9,398.6 L276.4,397.7 L276.9,396.7 L277.3,395.7 L277.6,394.8 L277.8,393.9 L278.0,393.1 L278.1,392.4 L278.2,391.9 L278.2,391.5 L278.3,391.2 L278.5,389.8 L278.2,388.5 L277.4,387.4 L276.2,386.7 L274.8,386.5 L273.5,386.8 L272.4,387.6 L271.7,388.8 L271.5,389.2 L271.3,389.8 L271.0,390.3 L270.8,390.9 L270.5,391.4 L270.2,392.0 L269.9,392.5 L269.7,392.8 L269.4,393.1 L269.1,393.4 L268.8,393.8 L268.3,394.2 L267.8,394.7 L267.4,395.1 L266.9,395.5 L266.4,395.8 L265.9,396.1 L265.5,396.4 L265.1,396.6 L264.7,396.7 L264.2,396.8 L263.7,396.9 L263.1,397.0 L262.5,397.0 L261.7,397.0 L260.9,397.0 L260.0,396.9 L258.9,396.8 L257.8,396.7 L256.5,396.5 L255.2,396.4 L253.7,396.2 L252.1,395.9 L250.4,395.6 L248.7,395.4 L247.0,395.0 L245.4,394.7 L243.8,394.3 L242.3,393.9 L240.9,393.5 L239.5,393.1 L238.1,392.6 L236.8,392.1 L235.5,391.5 L234.2,391.0 L233.0,390.4 L231.9,389.8 L230.8,389.2 L229.9,388.7 L229.1,388.2 L228.6,387.7 L228.0,387.2 L227.4,386.6 L226.9,385.9 L226.4,385.1 L225.9,384.4 L225.5,383.6 L225.0,382.9 L224.6,382.1 L224.2,381.6 L223.2,380.5 L221.9,379.9 L220.4,379.8 L219.1,380.3 L218.0,381.3 L217.4,382.6 L217.3,384.1Z" fill="#000"/>
<path d="M275.4,391.9 L275.7,392.2 L276.1,392.5 L276.4,392.8 L276.8,393.1 L277.1,393.4 L277.5,393.7 L277.8,394.0 L278.1,394.4 L278.3,394.8 L278.6,395.3 L278.8,395.8 L279.0,396.6 L279.2,397.5 L279.5,398.6 L279.8,399.7 L280.0,400.9 L280.4,402.2 L280.7,403.5 L281.2,404.7 L281.7,405.9 L282.3,406.9 L282.8,407.9 L283.4,408.9 L284.0,409.8 L284.7,410.8 L285.4,411.7 L286.2,412.7 L287.1,413.6 L288.0,414.5 L289.0,415.3 L290.1,416.1 L291.2,416.9 L292.3,417.7 L293.6,418.5 L294.8,419.2 L296.2,419.9 L297.6,420.6 L299.1,421.2 L300.6,421.9 L302.3,422.4 L304.0,423.0 L305.8,423.5 L307.7,424.0 L309.7,424.4 L311.7,424.8 L313.7,425.2 L315.7,425.6 L317.7,425.9 L319.7,426.1 L321.6,426.4 L323.6,426.6 L325.5,426.7 L327.5,426.8 L329.5,426.9 L331.4,426.9 L333.3,427.0 L335.1,426.9 L336.9,426.9 L338.6,426.9 L340.2,426.8 L341.7,426.7 L343.1,426.6 L344.4,426.4 L345.7,426.3 L346.8,426.1 L348.0,425.9 L349.0,425.7 L350.1,425.5 L351.2,425.2 L352.3,425.0 L353.5,424.8 L354.8,424.6 L356.0,424.4 L357.3,424.2 L358.6,423.9 L359.9,423.7 L361.1,423.4 L362.2,423.2 L363.3,422.9 L364.3,422.7 L365.2,422.4 L366.0,422.2 L366.8,421.9 L367.5,421.6 L368.1,421.3 L368.6,421.0 L369.1,420.8 L369.4,420.6 L369.6,420.5 L369.8,420.4 L370.9,419.7 L371.7,418.6 L371.9,417.3 L371.6,416.0 L370.9,414.9 L369.8,414.1 L368.5,413.9 L367.2,414.2 L366.8,414.3 L366.4,414.5 L366.1,414.7 L365.7,414.8 L365.3,415.0 L364.8,415.2 L364.3,415.4 L363.8,415.5 L363.2,415.7 L362.5,415.9 L361.7,416.1 L360.7,416.3 L359.7,416.6 L358.5,416.8 L357.3,417.0 L356.1,417.3 L354.8,417.5 L353.5,417.7 L352.3,417.9 L351.1,418.2 L349.9,418.4 L348.8,418.6 L347.7,418.8 L346.7,419.0 L345.7,419.2 L344.6,419.3 L343.5,419.5 L342.4,419.6 L341.2,419.7 L339.8,419.8 L338.3,419.9 L336.7,419.9 L335.0,420.0 L333.3,420.0 L331.5,420.0 L329.6,420.0 L327.8,420.0 L325.9,419.9 L324.1,419.8 L322.4,419.6 L320.6,419.4 L318.7,419.2 L316.8,418.9 L314.8,418.6 L312.9,418.2 L311.0,417.9 L309.2,417.5 L307.5,417.1 L305.8,416.6 L304.3,416.2 L302.9,415.7 L301.6,415.2 L300.3,414.6 L299.1,414.1 L297.9,413.5 L296.8,412.9 L295.8,412.2 L294.8,411.6 L293.9,410.9 L293.0,410.3 L292.2,409.7 L291.5,409.0 L290.9,408.4 L290.3,407.7 L289.7,407.0 L289.2,406.3 L288.7,405.5 L288.2,404.7 L287.7,403.9 L287.3,403.1 L286.9,402.3 L286.5,401.4 L286.1,400.4 L285.8,399.3 L285.4,398.2 L285.1,397.1 L284.7,396.0 L284.4,394.8 L283.9,393.8 L283.4,392.7 L282.9,391.8 L282.3,391.0 L281.6,390.4 L281.0,389.8 L280.4,389.3 L279.9,388.9 L279.4,388.6 L279.0,388.4 L278.8,388.2 L278.6,388.1 L277.8,387.6 L276.8,387.5 L275.9,387.8 L275.1,388.4 L274.6,389.2 L274.5,390.2 L274.8,391.1Z" fill="#000"/>
<path d="M366.6,412.4 L366.8,412.4 L367.1,412.4 L367.5,412.4 L367.9,412.3 L368.3,412.3 L368.8,412.2 L369.4,412.1 L369.9,412.0 L370.6,411.9 L371.2,411.8 L372.0,411.7 L372.7,411.5 L373.5,411.3 L374.3,411.1 L375.1,410.9 L376.0,410.7 L376.8,410.5 L377.7,410.3 L378.6,410.1 L379.5,410.0 L380.5,409.8 L381.6,409.7 L382.7,409.6 L383.9,409.5 L385.2,409.4 L386.4,409.3 L387.6,409.2 L388.8,409.1 L389.9,409.0 L391.0,409.0 L391.9,409.0 L392.8,409.0 L393.6,409.0 L394.3,409.0 L395.1,409.0 L396.0,409.0 L396.8,409.1 L397.8,409.1 L398.8,409.1 L400.0,409.1 L401.3,409.1 L402.7,409.1 L404.2,409.1 L405.8,409.2 L407.5,409.2 L409.2,409.2 L410.8,409.1 L412.4,409.1 L414.0,409.0 L415.4,408.9 L416.6,408.7 L417.8,408.6 L418.9,408.4 L420.0,408.2 L421.0,408.0 L422.1,407.7 L423.1,407.3 L424.1,406.9 L425.1,406.4 L426.0,405.8 L426.8,405.2 L427.6,404.6 L428.4,403.8 L429.2,403.1 L429.9,402.2 L430.6,401.3 L431.2,400.2 L431.7,399.1 L432.1,397.9 L432.4,396.6 L432.6,395.2 L432.6,393.6 L432.5,392.1 L432.3,390.6 L432.0,389.1 L431.8,387.6 L431.5,386.3 L431.3,385.2 L431.1,384.2 L431.0,383.6 L430.6,382.4 L429.8,381.4 L428.6,380.9 L427.4,380.8 L426.2,381.2 L425.2,382.0 L424.7,383.2 L424.6,384.4 L424.7,385.2 L424.8,386.3 L425.0,387.4 L425.2,388.7 L425.4,390.1 L425.5,391.4 L425.6,392.7 L425.7,393.8 L425.7,394.7 L425.6,395.4 L425.4,395.9 L425.2,396.4 L425.0,396.9 L424.7,397.3 L424.3,397.8 L424.0,398.2 L423.5,398.6 L423.1,399.0 L422.6,399.4 L422.0,399.8 L421.5,400.1 L421.0,400.3 L420.5,400.6 L419.9,400.8 L419.2,401.0 L418.5,401.1 L417.6,401.3 L416.7,401.5 L415.7,401.6 L414.6,401.7 L413.5,401.8 L412.1,401.9 L410.7,401.9 L409.1,402.0 L407.5,402.0 L405.9,401.9 L404.3,401.9 L402.8,401.9 L401.3,401.9 L400.0,401.9 L398.9,401.9 L397.9,401.9 L397.0,401.9 L396.1,401.9 L395.3,401.9 L394.4,401.9 L393.6,401.9 L392.7,401.9 L391.7,401.9 L390.6,402.0 L389.5,402.1 L388.3,402.2 L387.1,402.3 L385.8,402.4 L384.5,402.5 L383.3,402.6 L382.0,402.8 L380.8,402.9 L379.6,403.1 L378.5,403.2 L377.4,403.4 L376.3,403.6 L375.3,403.9 L374.4,404.1 L373.4,404.4 L372.6,404.6 L371.8,404.8 L371.0,405.0 L370.4,405.2 L369.8,405.4 L369.2,405.5 L368.6,405.7 L368.1,405.8 L367.6,406.0 L367.1,406.1 L366.7,406.2 L366.3,406.3 L366.0,406.4 L365.7,406.5 L365.4,406.6 L364.3,407.0 L363.5,407.8 L363.1,408.9 L363.1,410.1 L363.5,411.2 L364.3,412.0 L365.4,412.4Z" fill="#000"/>
<path d="M408,357.6 L424.7,359 L427.3,369.7 L430,382 L431,392 L425,392 L419.5,383.6 L409.5,369.7 Z" fill="#000"/>
<path d="M413.7,363.4 L414.3,363.3 L415.2,363.1 L416.3,362.9 L417.4,362.6 L418.6,362.3 L419.9,362.1 L421.2,361.8 L422.4,361.5 L423.6,361.3 L424.6,361.1 L425.6,360.9 L426.5,360.7 L427.4,360.6 L428.3,360.5 L429.1,360.3 L430.0,360.2 L430.8,360.0 L431.7,359.9 L432.6,359.8 L433.5,359.6 L434.4,359.5 L435.3,359.3 L436.2,359.1 L437.1,359.0 L438.0,358.8 L438.9,358.7 L439.8,358.5 L440.7,358.4 L441.6,358.2 L442.5,358.1 L443.3,357.9 L444.2,357.8 L445.1,357.7 L446.0,357.5 L446.8,357.4 L447.7,357.3 L448.6,357.1 L449.5,357.0 L450.4,356.9 L451.3,356.8 L452.3,356.7 L453.4,356.5 L454.5,356.4 L455.7,356.3 L456.8,356.2 L458.0,356.0 L459.0,355.9 L459.9,355.8 L460.7,355.8 L461.3,355.7 L462.4,355.4 L463.2,354.6 L463.8,353.6 L463.9,352.5 L463.6,351.4 L462.8,350.6 L461.8,350.0 L460.7,349.9 L460.1,350.0 L459.3,350.0 L458.4,350.1 L457.4,350.2 L456.3,350.3 L455.1,350.4 L453.9,350.5 L452.8,350.6 L451.7,350.7 L450.7,350.8 L449.7,350.9 L448.8,351.0 L447.8,351.1 L446.9,351.2 L446.0,351.3 L445.1,351.5 L444.2,351.6 L443.3,351.7 L442.4,351.8 L441.5,351.9 L440.6,352.1 L439.7,352.2 L438.8,352.3 L437.9,352.5 L437.0,352.6 L436.1,352.8 L435.2,352.9 L434.3,353.1 L433.4,353.2 L432.5,353.4 L431.6,353.5 L430.7,353.7 L429.9,353.8 L429.0,353.9 L428.1,354.1 L427.2,354.2 L426.3,354.4 L425.4,354.5 L424.4,354.7 L423.4,354.9 L422.3,355.1 L421.1,355.4 L419.8,355.7 L418.5,356.0 L417.2,356.3 L416.0,356.7 L414.9,356.9 L413.8,357.2 L413.0,357.4 L412.3,357.6 L411.3,358.1 L410.5,358.9 L410.0,360.0 L410.1,361.2 L410.6,362.2 L411.4,363.0 L412.5,363.5Z" fill="#000"/>
<path d="M446.5,356.5 L462,350 L469.6,350 L470,356 L469.3,361 L467.5,365.5 L464.7,369.7 L460.5,374 L456.5,377.3 L454.3,377.8 L453.2,375.5 L452.9,370 L452.2,365 L450,360.5 Z" fill="#000"/>
<line x1="364.4" y1="270.6" x2="455" y2="377.3" stroke="#222" stroke-width="0.8"/>
<line x1="320" y1="269.2" x2="360" y2="269.2" stroke="#444" stroke-width="0.9" stroke-dasharray="1.2 1"/>
</svg>

<div class="g" style="left:1px;top:197px;width:676px;height:1px"></div>
<div class="g" style="left:437px;top:1px;width:1px;height:573px"></div>
<div class="r" style="left:1px;top:270px;width:676px;height:1px"></div>
<div class="r" style="left:310px;top:1px;width:1px;height:573px"></div>
<div class="t" style="left:440px;top:1px;color:#0f0">1</div>
<div class="t" style="left:2px;top:187px;color:#0f0">1</div>
<div class="t" style="left:313px;top:563px;color:#f00">2</div>
<div class="t" style="left:668.5px;top:259px;color:#f00">2</div>
<div class="t k" style="top:1px">Machine format:</div><div class="t v" style="top:1px">Tajima</div>
<div class="t k" style="top:15px">Color changes:</div><div class="t v" style="top:15px">0</div>
<div class="t k" style="top:30px">Stops:</div><div class="t v" style="top:30px">1</div>
<div class="t k" style="top:43px">Trims:</div><div class="t v" style="top:43px">2</div>
<div class="t k" style="top:58px">Appliqués:</div><div class="t v" style="top:58px">0</div>
<div class="t k" style="top:72px">Left:</div><div class="t v" style="top:72px">81.5 mm</div>
<div class="t k" style="top:86px">Right:</div><div class="t v" style="top:86px">18.4 mm</div>
<div class="t k" style="top:100px">Up:</div><div class="t v" style="top:100px">15.9 mm</div>
<div class="t k" style="top:114px">Down:</div><div class="t v" style="top:114px">72.9 mm</div>
<div class="t k" style="top:128px">EndX:</div><div class="t v" style="top:128px">-40.2 mm</div>
<div class="t k" style="top:142px">EndY:</div><div class="t v" style="top:142px">-23.3 mm</div>
<div class="t k" style="top:156px">Area</div><div class="t v" style="top:156px">8870.9 mm²</div>
<div class="t k" style="top:170px">Max stitch:</div><div class="t v" style="top:170px">6.9 mm</div>
<div class="t k" style="top:184px">Min stitch:</div><div class="t v" style="top:184px">0.0 mm</div>
<div class="t k" style="top:198px">Max jump:</div><div class="t v" style="top:198px">6.9 mm</div>
<div class="t k" style="top:212px">Total thread:</div><div class="t v" style="top:212px">34.95m</div>
<div class="t k" style="top:226px">Total bobbin:</div><div class="t v" style="top:226px">11.77m</div>
<div class="t k" style="top:240px">Stop Sequence:</div>
<div class="t h" style="left:679px;top:255px">#</div>
<div class="t h" style="left:693px;top:255px">N#</div>
<div class="t h" style="left:711px;top:255px">Color</div>
<div class="t h" style="left:755px;top:255px">St.</div>
<div class="t h" style="left:774px;top:255px">Code</div>
<div class="t h" style="left:804px;top:255px">Name</div>
<div class="t h" style="left:837px;top:255px">Chart</div>
<div class="t" style="left:679px;top:268px">1.</div>
<div class="t" style="left:693px;top:268px">8</div>
<div class="l" style="left:709px;top:268px;width:31px;height:11px"></div>
<div class="t" style="left:744px;top:268px">7,497</div>
<div class="t" style="left:794px;top:268px">8</div>
<div class="t" style="left:804px;top:268px">Black</div>
<div class="t" style="left:838px;top:268px">Default</div>
</body></html>
